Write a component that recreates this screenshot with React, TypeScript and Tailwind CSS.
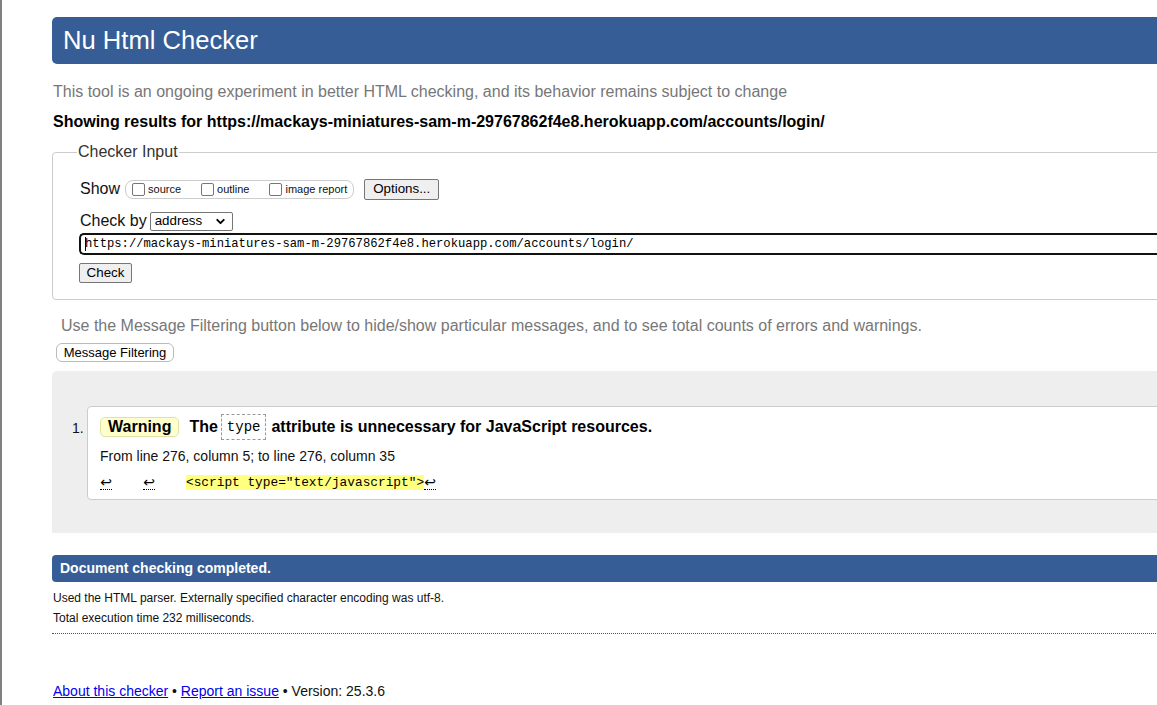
import { ChevronDown } from "lucide-react";

const mono = "font-['Liberation_Mono','DejaVu_Sans_Mono',monospace]";

const Checkbox = ({ label, last }: { label: string; last?: boolean }) => (
  <span className={`flex items-center ${last ? "" : "mr-[20px]"}`}>
    <span className="h-[13px] w-[13px] rounded-[2px] border border-[#767676] bg-white" />
    <span className="ml-[3px] text-[11px] leading-[13px] text-[#111]">{label}</span>
  </span>
);

const Newline = ({ gap = true }: { gap?: boolean }) => (
  <span
    className={`flex h-[16px] w-[12px] items-center justify-center border-b border-dotted border-black font-['DejaVu_Sans',sans-serif] text-[14px] leading-none ${gap ? "mr-[31px]" : ""}`}
  >
    ↩
  </span>
);

export default function App() {
  return (
    <div className="h-[705px] w-full overflow-hidden border-l-2 border-[#808080] bg-white font-['Liberation_Sans',Arial,sans-serif] text-[#111]">
      <div className="w-[1260px] pl-[50px] pt-[17px]">
        <div className="flex h-[47px] items-center rounded-l-[5px] bg-[#365d95] pl-[11px] text-[25.6px] leading-none text-white">
          Nu Html Checker
        </div>

        <p className="mt-[19px] pl-[1px] text-[16px] leading-[18px] text-[#777]">
          This tool is an ongoing experiment in better HTML checking, and its behavior remains subject to change
        </p>
        <p className="mt-[12px] pl-[1px] text-[16px] font-bold leading-[18px] text-black">
          Showing results for https://mackays-miniatures-sam-m-29767862f4e8.herokuapp.com/accounts/login/
        </p>

        <fieldset className="mt-[12px] rounded-[4px] border border-[#ccc] pb-[16px] pl-[24px]">
          <legend className="px-[1px] text-[16px] leading-[18px] text-[#333]">Checker Input</legend>

          <div className="ml-[3px] mt-[18px] flex h-[20px] items-center text-[16px]">
            <span>Show</span>
            <span className="ml-[5px] flex h-[19px] items-center rounded-[8px] border border-[#ccc] px-[6px]">
              <Checkbox label="source" />
              <Checkbox label="outline" />
              <Checkbox label="image report" last />
            </span>
            <button className="ml-[10px] flex h-[21px] w-[75px] items-center justify-center rounded-[2px] border border-[#767676] bg-[#efefef] text-[13.33px] text-black">
              Options...
            </button>
          </div>

          <div className="ml-[3px] mt-[12px] flex h-[20px] items-center text-[16px]">
            <span>Check by</span>
            <span className="ml-[3px] flex h-[19px] w-[83px] items-center justify-between rounded-[2px] border border-[#767676] bg-white pl-[4px] pr-[5px] text-[13.33px] text-black">
              address
              <ChevronDown size={13} strokeWidth={3.5} />
            </span>
          </div>

          <div className={`ml-[2px] mt-[2px] flex h-[22px] items-center rounded-l-[5px] border-2 border-r-0 border-[#111] pl-[4px] text-[12.2px] text-black ${mono}`}>
            <span className="mr-[-1px] h-[14px] w-[1px] bg-black" />
            https://mackays-miniatures-sam-m-29767862f4e8.herokuapp.com/accounts/login/
          </div>

          <button className="ml-[2px] mt-[8px] flex h-[20px] w-[53px] items-center justify-center rounded-[2px] border border-[#767676] bg-[#efefef] text-[13.33px] text-black">
            Check
          </button>
        </fieldset>

        <p className="mt-[17px] pl-[9px] text-[16px] leading-[18px] text-[#777]">
          Use the Message Filtering button below to hide/show particular messages, and to see total counts of errors and warnings.
        </p>
        <button className="ml-[4px] mt-[8px] flex h-[19px] w-[118px] items-center justify-center rounded-[6px] border border-[#bbb] bg-white text-[13px] text-black">
          Message Filtering
        </button>

        <div className="mt-[9px] flex items-start rounded-tl-[5px] bg-[#eee] pb-[33px] pl-[20px] pt-[35px]">
          <span className="mt-[14px] w-[15px] text-[14px] leading-[16px]">1.</span>
          <div className="flex-1 rounded-[4px] border border-[#ccc] bg-white pb-[9px] pl-[12px] pt-[7px]">
            <div className="flex h-[26px] items-center text-[16px] font-bold text-black">
              <span className="flex h-[20px] items-center rounded-[5px] border border-[#e2e2a8] bg-[#ffffcc] px-[7px]">
                Warning
              </span>
              <span className="ml-[10px]">The</span>
              <code className={`ml-[3px] flex h-[26px] items-center border border-dashed border-[#999] px-[5px] text-[14px] font-normal ${mono}`}>
                type
              </code>
              <span className="ml-[5px]">attribute is unnecessary for JavaScript resources.</span>
            </div>
            <p className="mt-[8px] text-[14px] leading-[16px]">From line 276, column 5; to line 276, column 35</p>
            <div className={`mt-[10px] flex h-[16px] items-center text-[12.8px] text-black ${mono}`}>
              <Newline />
              <Newline />
              <span className="bg-[#ffff80] leading-[15px]">&lt;script type="text/javascript"&gt;</span>
              <Newline gap={false} />
            </div>
          </div>
        </div>

        <div className="mt-[22px] flex h-[27px] items-center rounded-l-[4px] bg-[#365d95] pl-[8px] text-[14px] font-bold text-white">
          Document checking completed.
        </div>
        <p className="mt-[6px] pl-[1px] text-[12px] leading-[20px]">
          Used the HTML parser. Externally specified character encoding was utf-8.
        </p>
        <p className="pl-[1px] text-[12px] leading-[20px]">Total execution time 232 milliseconds.</p>
        <div className="mt-[5px] border-t border-dotted border-[#555]" />

        <p className="mt-[49px] pl-[1px] text-[14px] leading-[16px]">
          <a className="text-[#0000ee] underline">About this checker</a> •{" "}
          <a className="text-[#0000ee] underline">Report an issue</a> • Version: 25.3.6
        </p>
      </div>
    </div>
  );
}
